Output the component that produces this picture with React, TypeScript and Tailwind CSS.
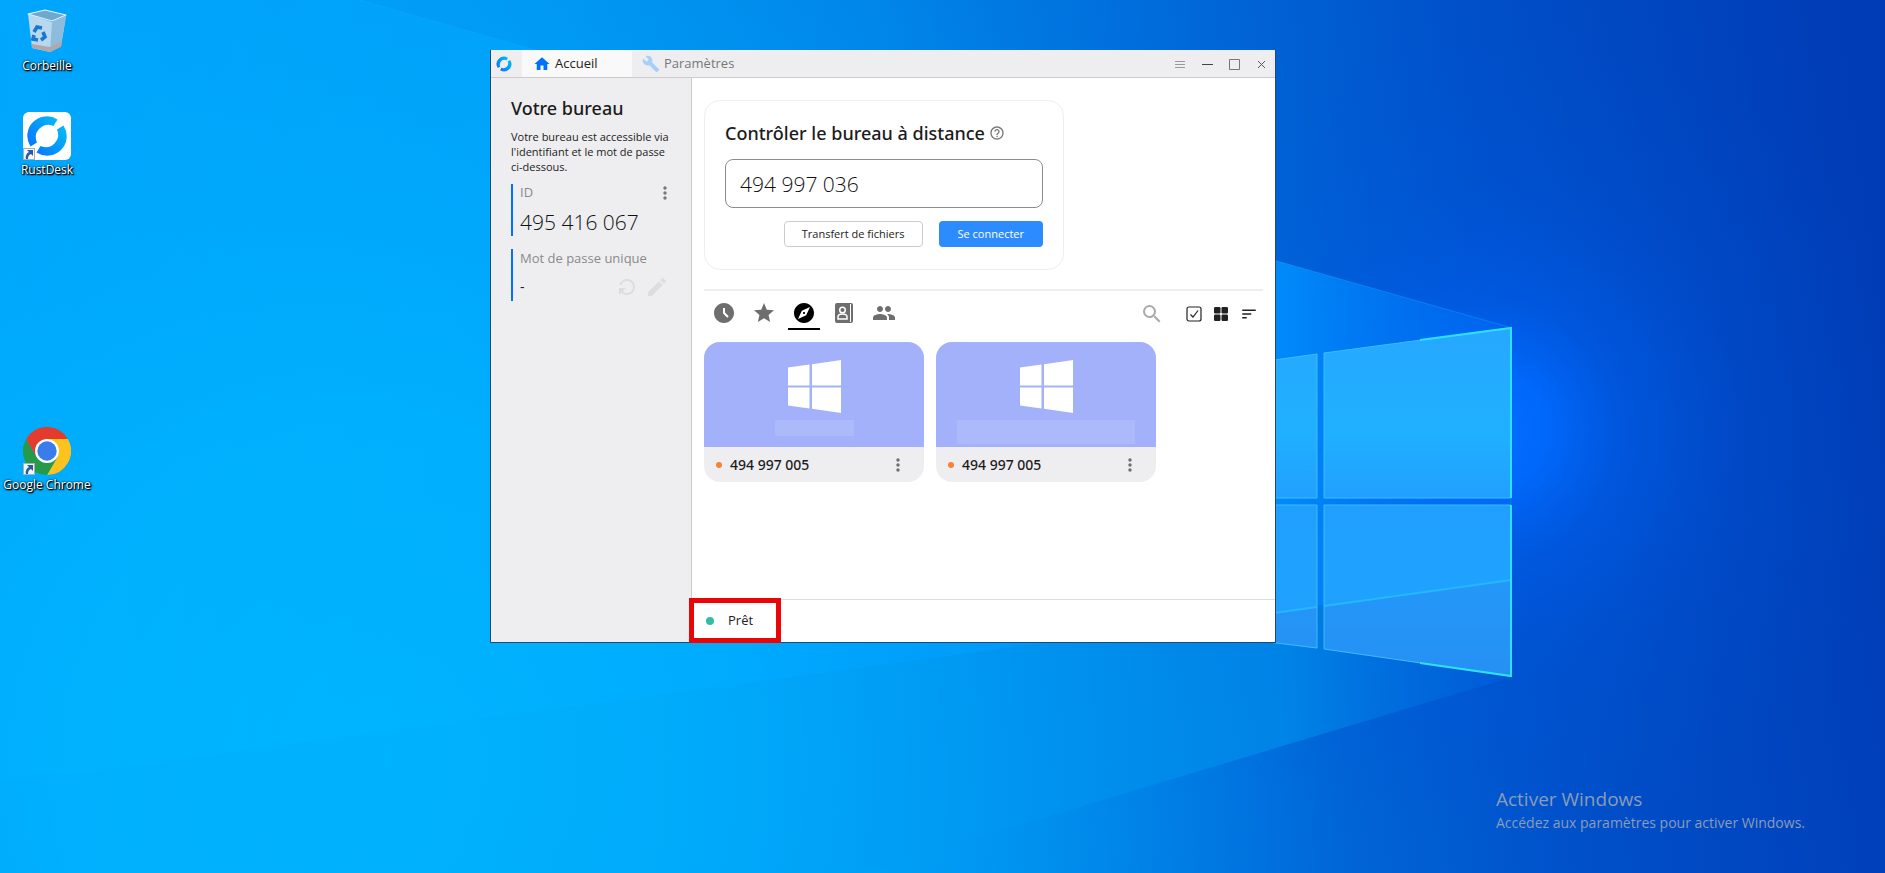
import type { ComponentType, ReactNode } from "react";
import {
  MdAccessTimeFilled,
  MdBuild,
  MdEdit,
  MdExplore,
  MdGroup,
  MdHelpOutline,
  MdHome,
  MdMoreVert,
  MdRefresh,
  MdSearch,
  MdSort,
  MdStar,
} from "react-icons/md";

type Peer = {
  key: string;
  id: string;
  nameClass: string;
};

const peers: Peer[] = [
  { key: "a", id: "494 997 005", nameClass: "h-4 w-[79px]" },
  { key: "b", id: "494 997 005", nameClass: "h-6 w-[178px]" },
];

function Wallpaper() {
  return (
    <svg
      className="absolute inset-0 h-full w-full"
      viewBox="0 0 1885 873"
      preserveAspectRatio="xMidYMid slice"
      aria-hidden="true"
    >
      <defs>
        <linearGradient id="base" x1="0" y1="560" x2="1885" y2="300" gradientUnits="userSpaceOnUse">
          <stop offset="0" stopColor="#00a8ff" />
          <stop offset="0.3" stopColor="#009af4" />
          <stop offset="0.5" stopColor="#0084e8" />
          <stop offset="0.65" stopColor="#006ada" />
          <stop offset="0.8" stopColor="#0050ca" />
          <stop offset="1" stopColor="#003cb6" />
        </linearGradient>
        <radialGradient id="dawn" cx="400" cy="760" r="950" gradientUnits="userSpaceOnUse">
          <stop offset="0" stopColor="#00b8ff" />
          <stop offset="0.35" stopColor="#00b4ff" stopOpacity="0.85" />
          <stop offset="0.7" stopColor="#00a4f8" stopOpacity="0.4" />
          <stop offset="1" stopColor="#0090f0" stopOpacity="0" />
        </radialGradient>
        <linearGradient id="beam" x1="0" y1="0" x2="1512" y2="0" gradientUnits="userSpaceOnUse">
          <stop offset="0" stopColor="#00b4ff" stopOpacity="0.15" />
          <stop offset="0.5" stopColor="#00a8ff" stopOpacity="0.6" />
          <stop offset="0.85" stopColor="#0090ff" stopOpacity="0.85" />
          <stop offset="1" stopColor="#0072fa" stopOpacity="0.3" />
        </linearGradient>
        <linearGradient id="low" x1="0" y1="0" x2="1512" y2="0" gradientUnits="userSpaceOnUse">
          <stop offset="0" stopColor="#00a4f8" stopOpacity="0.1" />
          <stop offset="0.6" stopColor="#009cf4" stopOpacity="0.4" />
          <stop offset="0.85" stopColor="#008cea" stopOpacity="0.75" />
          <stop offset="1" stopColor="#0068de" stopOpacity="0.3" />
        </linearGradient>
        <radialGradient id="glow" cx="1490" cy="430" r="420" gradientUnits="userSpaceOnUse">
          <stop offset="0" stopColor="#0070ff" />
          <stop offset="0.14" stopColor="#006aff" stopOpacity="0.9" />
          <stop offset="0.32" stopColor="#005eee" stopOpacity="0.55" />
          <stop offset="0.6" stopColor="#0056e0" stopOpacity="0.2" />
          <stop offset="1" stopColor="#0050d0" stopOpacity="0" />
        </radialGradient>
        <linearGradient id="pane" x1="0" y1="327" x2="0" y2="677" gradientUnits="userSpaceOnUse">
          <stop offset="0" stopColor="#26a8ff" />
          <stop offset="0.3" stopColor="#20b0ff" />
          <stop offset="0.5" stopColor="#219fff" />
          <stop offset="0.75" stopColor="#1fa2ff" />
          <stop offset="1" stopColor="#2496f8" />
        </linearGradient>
      </defs>
      <rect width="1885" height="873" fill="url(#base)" />
      <rect width="1885" height="873" fill="url(#dawn)" />
      <rect width="1885" height="873" fill="url(#glow)" />
      <path d="M360 0L1512 328V580L1036 644L0 783V0Z" fill="url(#beam)" />
      <path d="M1512 580V677L860 873H0V783L1036 644Z" fill="url(#low)" />
      <path d="M360 0L1512 328" stroke="#18a4ff" strokeOpacity="0.4" fill="none" />
      <path d="M1260 362L1317 354V498H1260ZM1324 353L1511 328V498H1324ZM1260 505H1317V648L1260 641ZM1324 505H1511V676L1324 649Z" fill="url(#pane)" />
      <path d="M1260 615L1317 607V648L1260 641ZM1324 606L1511 580V676L1324 649Z" fill="#2a8af0" fillOpacity="0.45" />
      <path d="M1260 615L1317 607M1324 606L1511 580" stroke="#24b8ff" strokeWidth="2" fill="none" />
      <path d="M1260 362L1317 354V498H1260M1324 353V498H1511M1324 353L1511 328M1260 505H1317V648L1260 641M1324 649V505H1511M1324 649L1511 676" stroke="#3cbcff" strokeWidth="1" fill="none" />
      <path d="M1420 340L1511 328V498M1511 505V676L1420 663" stroke="#30e0ff" strokeWidth="2" fill="none" />
    </svg>
  );
}

function RustDeskMark({ className }: { className: string }) {
  return (
    <svg viewBox="0 0 48 48" className={className} aria-hidden="true">
      <defs>
        <linearGradient id="ring" x1="4" y1="40" x2="42" y2="8" gradientUnits="userSpaceOnUse">
          <stop offset="0" stopColor="#0a6cff" />
          <stop offset="1" stopColor="#00c4f4" />
        </linearGradient>
      </defs>
      <path d="M7.5 34.5A19.5 19.5 0 0 1 34.5 7.5L30.5 14A12.5 12.5 0 0 0 14 30.5Z" fill="url(#ring)" />
      <path d="M40.5 13.5A19.5 19.5 0 0 1 13.5 40.5L17.5 34A12.5 12.5 0 0 0 34 17.5Z" fill="url(#ring)" />
    </svg>
  );
}

function ShortcutArrow() {
  return (
    <svg viewBox="0 0 12 12" className="absolute bottom-0 left-0 size-3" aria-hidden="true">
      <rect x="0.5" y="0.5" width="11" height="11" fill="#f4f6f8" stroke="#a8b0b8" />
      <path d="M4 2H10V8L8 6C6 7 5 8 5 11H3C2 8 4 5 6 4Z" fill="#2a5aa0" />
    </svg>
  );
}

function RecycleBin() {
  return (
    <svg viewBox="0 0 48 48" className="size-12" aria-hidden="true">
      <path d="M5 6L29 14L43 8L38 38L27 44L9 40Z" fill="#b8d8ee" />
      <path d="M29 14L43 8L38 38L27 44Z" fill="#8ebcdc" />
      <path d="M5 6L22 2L43 7L29 13Z" fill="#6ea8cc" stroke="#e4f0f8" strokeWidth="1.2" strokeLinejoin="round" />
      <path d="M9 36L27 39L39 33L38 39L27 44L9 40Z" fill="#b0a8ac" />
      <g fill="none" stroke="#1878d0" strokeWidth="3.6">
        <path d="M11 24L14 19L19 20" />
        <path d="M20 24L22 29L18 32" />
        <path d="M15 32L10 31L11 27" />
      </g>
    </svg>
  );
}

function ChromeLogo() {
  return (
    <svg viewBox="0 0 48 48" className="size-12" aria-hidden="true">
      <path d="M24 12H44.8A24 24 0 0 1 24 48L34.4 30Z" fill="#fcc31e" />
      <path d="M13.6 30L3.2 12A24 24 0 0 0 24 48L34.4 30Z" fill="#269a48" />
      <path d="M3.2 12L13.6 30L24 12H44.8A24 24 0 0 0 3.2 12Z" fill="#e33b2e" />
      <circle cx="24" cy="24" r="12" fill="#fff" />
      <circle cx="24" cy="24" r="9.7" fill="#3a7cec" />
    </svg>
  );
}

function DesktopIcon({ label, children }: { label: string; children: ReactNode }) {
  return (
    <button
      type="button"
      className="flex w-[94px] flex-col items-center gap-0.5 text-xs leading-4 text-white [text-shadow:1px_1px_2px_#000,0_0_2px_#000,1px_1px_1px_#000]"
    >
      <span className="relative size-12">{children}</span>
      <span className="whitespace-nowrap">{label}</span>
    </button>
  );
}

function WindowControls() {
  const shapes = [
    { label: "Menu", d: "M3 5.5H13M3 8.5H13M3 11.5H13", stroke: "#999" },
    { label: "Réduire", d: "M3 8.5H14", stroke: "#444" },
    { label: "Agrandir", d: "M3.5 3.5H13.5V13.5H3.5Z", stroke: "#777" },
    { label: "Fermer", d: "M5 5L12 12M12 5L5 12", stroke: "#555" },
  ];
  return (
    <div className="ml-auto flex items-center gap-[11px] pr-[6px]">
      {shapes.map((shape) => (
        <button key={shape.label} type="button" aria-label={shape.label}>
          <svg viewBox="0 0 16 16" className="size-4" fill="none" stroke={shape.stroke}>
            <path d={shape.d} />
          </svg>
        </button>
      ))}
    </div>
  );
}

function AddressBookIcon({ className }: { className?: string }) {
  return (
    <svg viewBox="0 0 20 20" className={className} aria-hidden="true">
      <rect x="1" y="0" width="18" height="20" rx="2" fill="#6e6e6e" />
      <path d="M16.5 1V19" stroke="#fff" strokeWidth="1" />
      <circle cx="8.5" cy="7" r="2.8" fill="none" stroke="#fff" strokeWidth="1.5" />
      <path d="M4 16V14C4 12 6 11 8.5 11S13 12 13 14V16Z" fill="none" stroke="#fff" strokeWidth="1.5" />
    </svg>
  );
}

function CheckIcon() {
  return (
    <svg viewBox="0 0 16 16" className="size-4" fill="none" stroke="#222" aria-hidden="true">
      <rect x="1" y="1" width="14" height="14" rx="2" strokeWidth="1.2" />
      <path d="M4.5 8.5L7 11L12 4.5" strokeWidth="1.2" />
    </svg>
  );
}

function GridIcon() {
  return (
    <svg viewBox="0 0 14 14" className="size-[14px]" fill="#222" aria-hidden="true">
      <rect width="6.5" height="6.5" rx="1.2" />
      <rect x="7.5" width="6.5" height="6.5" rx="1.2" />
      <rect y="7.5" width="6.5" height="6.5" rx="1.2" />
      <rect x="7.5" y="7.5" width="6.5" height="6.5" rx="1.2" />
    </svg>
  );
}

const peerTabs: { label: string; Icon: ComponentType<{ className?: string }>; className: string }[] = [
  { label: "Sessions récentes", Icon: MdAccessTimeFilled, className: "size-6" },
  { label: "Favoris", Icon: MdStar, className: "size-6" },
  { label: "Découverts", Icon: MdExplore, className: "size-6" },
  { label: "Carnet d'adresses", Icon: AddressBookIcon, className: "size-5" },
  { label: "Groupe", Icon: MdGroup, className: "size-6" },
];

function PeerTabs() {
  return (
    <div className="flex h-10 items-center pr-[5px]">
      {peerTabs.map(({ label, Icon, className }, index) => (
        <button
          key={label}
          type="button"
          aria-label={label}
          className={
            index === 2
              ? "mx-1 flex h-8 w-8 items-center justify-center border-b-2 border-black text-black"
              : "mx-1 flex h-8 w-8 items-center justify-center border-b-2 border-transparent text-[#6e6e6e]"
          }
        >
          <Icon className={className} />
        </button>
      ))}
      <div className="ml-auto flex items-center gap-3 text-[#222]">
        <button type="button" aria-label="Rechercher" className="mr-2.5 text-[#aaa]">
          <MdSearch className="size-6" />
        </button>
        <button type="button" aria-label="Sélectionner">
          <CheckIcon />
        </button>
        <button type="button" aria-label="Grille">
          <GridIcon />
        </button>
        <button type="button" aria-label="Trier">
          <MdSort className="size-[18px]" />
        </button>
      </div>
    </div>
  );
}

function PeerCard({ peer }: { peer: Peer }) {
  return (
    <article className="w-[220px] overflow-hidden rounded-2xl bg-[#eeeef0]">
      <div className="flex h-[105px] flex-col items-center bg-[#a3b1fb] pt-[18px]">
        <svg viewBox="0 0 53 53" className="size-[53px]" fill="#fff" aria-hidden="true">
          <path d="M0 7.5L21.5 4.5V25.5H0ZM24 4.2L53 0V25.5H24ZM0 27.5H21.5V48.5L0 45.5ZM24 27.5H53V53L24 48.8Z" />
        </svg>
        <div className={`mt-[7px] bg-[#acb9fb] ${peer.nameClass}`} />
      </div>
      <div className="flex h-[35px] items-center pl-3 pr-4">
        <span className="mr-2 size-1.5 rounded-full bg-[#fb8133]" />
        <span className="font-['Noto_Sans','Open_Sans',sans-serif] text-sm font-medium text-[#1c1c1c]">{peer.id}</span>
        <button type="button" aria-label="Options" className="ml-auto text-[#6e6e6e]">
          <MdMoreVert className="size-5" />
        </button>
      </div>
    </article>
  );
}

function Sidebar() {
  return (
    <aside className="w-[201px] shrink-0 border-r border-[#ccc] bg-[#eeeef0] pl-5 pt-4">
      <h1 className="font-['Noto_Sans','Open_Sans',sans-serif] text-lg leading-7 font-medium text-[#1c1c1c]">
        Votre bureau
      </h1>
      <p className="mt-[7px] mr-4 text-[11px] leading-[15px] text-[#222]">
        Votre bureau est accessible via l'identifiant et le mot de passe ci-dessous.
      </p>
      <div className="mt-[10px] h-[52px] border-l-2 border-[#0071ff] pl-[7px]">
        <div className="flex h-[18px] items-center justify-between pr-4 text-[13px] text-[#8a8a8a]">
          <span>ID</span>
          <button type="button" aria-label="Menu" className="text-[#777]">
            <MdMoreVert className="size-5" />
          </button>
        </div>
        <p className="text-[21px] leading-10 font-light text-[#111]">495 416 067</p>
      </div>
      <div className="mt-[13px] h-[52px] border-l-2 border-[#0071ff] pl-[7px]">
        <p className="text-[13px] leading-[18px] text-[#8a8a8a]">Mot de passe unique</p>
        <div className="flex h-10 items-center pr-[22px] text-sm text-[#222]">
          <span>-</span>
          <div className="ml-auto flex gap-1.5 text-[#ddd]">
            <button type="button" aria-label="Actualiser">
              <MdRefresh className="size-6 rotate-180" />
            </button>
            <button type="button" aria-label="Modifier">
              <MdEdit className="size-6" />
            </button>
          </div>
        </div>
      </div>
    </aside>
  );
}

export default function App() {
  return (
    <div className="relative min-h-screen overflow-hidden bg-[#0078d7] font-['Open_Sans','Noto_Sans',sans-serif]">
      <Wallpaper />

      <div className="absolute left-0 top-2">
        <DesktopIcon label="Corbeille">
          <RecycleBin />
        </DesktopIcon>
      </div>
      <div className="absolute left-0 top-28">
        <DesktopIcon label="RustDesk">
          <span className="block size-12 rounded-md bg-white">
            <RustDeskMark className="size-12" />
          </span>
          <ShortcutArrow />
        </DesktopIcon>
      </div>
      <div className="absolute left-0 top-[427px]">
        <DesktopIcon label="Google Chrome">
          <ChromeLogo />
          <ShortcutArrow />
        </DesktopIcon>
      </div>

      <main className="absolute left-[490px] top-[50px] flex w-[786px] flex-col border border-t-0 border-[#1e4a70] bg-white">
        <header className="flex h-7 items-center border-b border-[#ccc] bg-[#eeeef0]">
          <RustDeskMark className="mx-1 size-[18px]" />
          <nav className="ml-[5px] flex h-full text-[13px]">
            <button type="button" className="flex w-[110px] items-center gap-1 bg-[#f9f9f9] pl-[11px] text-[#222]">
              <MdHome className="size-[18px] text-[#0071ff]" />
              Accueil
            </button>
            <button type="button" className="flex items-center gap-1 pl-[10px] text-[#777]">
              <MdBuild className="size-[18px] text-[#a6d0fb]" />
              Paramètres
            </button>
          </nav>
          <WindowControls />
        </header>

        <div className="flex">
          <Sidebar />
          <div className="flex min-w-0 flex-1 flex-col">
            <div className="h-[521px] px-3 pt-[22px]">
              <section className="w-[360px] rounded-2xl border border-[#eee] px-5 pb-[22px] pt-4">
                <h2 className="flex items-center gap-1 font-['Noto_Sans','Open_Sans',sans-serif] text-lg leading-8 font-medium text-[#1c1c1c]">
                  <label htmlFor="remote-id">Contrôler le bureau à distance</label>
                  <MdHelpOutline className="size-4 text-[#777]" />
                </h2>
                <input
                  id="remote-id"
                  defaultValue="494 997 036"
                  className="mt-[10px] h-[49px] w-full rounded-lg border border-[#8c8c8c] px-[14px] text-[21px] font-light text-[#111]"
                />
                <div className="mt-[13px] flex justify-end gap-4 text-[11px]">
                  <button type="button" className="h-[26px] rounded border border-[#ccc] px-[17px] text-[#222]">
                    Transfert de fichiers
                  </button>
                  <button type="button" className="h-[26px] rounded bg-[#2c8cff] px-[19px] text-white">
                    Se connecter
                  </button>
                </div>
              </section>
              <hr className="mt-[19px] border-t-2 border-[#eee]" />
              <div className="mt-[3px]">
                <PeerTabs />
              </div>
              <div className="mt-2 flex gap-3">
                {peers.map((peer) => (
                  <PeerCard key={peer.key} peer={peer} />
                ))}
              </div>
            </div>
            <footer className="relative flex h-[43px] items-center border-t border-[#ddd] pl-[14px] text-[13px] text-[#222]">
              <span className="mr-[14px] size-2 rounded-full bg-[#32bea6]" />
              Prêt
              <div className="absolute -left-[3px] -top-0.5 h-[45px] w-[92px] border-[5px] border-[#ea0606]" />
            </footer>
          </div>
        </div>
      </main>

      <aside className="absolute bottom-10 right-20 text-[#8a9cb8]">
        <p className="text-[19px] leading-7">Activer Windows</p>
        <p className="text-sm leading-5">Accédez aux paramètres pour activer Windows.</p>
      </aside>
    </div>
  );
}
